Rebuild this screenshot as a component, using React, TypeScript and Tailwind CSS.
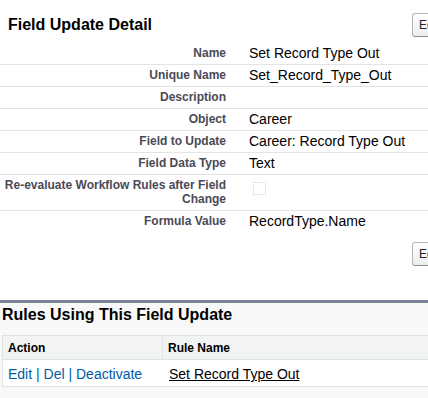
import React from 'react';

interface DetailRow {
  label: string;
  value?: string;
  checkbox?: boolean;
  last?: boolean;
}

const rows: DetailRow[] = [
  { label: 'Name', value: 'Set Record Type Out' },
  { label: 'Unique Name', value: 'Set_Record_Type_Out' },
  { label: 'Description', value: '' },
  { label: 'Object', value: 'Career' },
  { label: 'Field to Update', value: 'Career: Record Type Out' },
  { label: 'Field Data Type', value: 'Text' },
  { label: 'Re-evaluate Workflow Rules after Field Change', checkbox: true },
  { label: 'Formula Value', value: 'RecordType.Name', last: true },
];

// grey classic-style button, cut off by the window's right edge
const EditButton: React.FC = () => (
  <button className="h-[24px] shrink-0 rounded-[3px] border border-[#b5b5b5] border-b-[#8f8f8f] bg-gradient-to-b from-white to-[#ededed] px-[6px] text-[12px] leading-[14px] text-[#222]">
    Edit
  </button>
);

const App: React.FC = () => {
  return (
    <div className="w-[428px] h-[398px] overflow-hidden bg-white font-['Liberation_Sans',Arial,sans-serif]">
      <div className="w-[480px]">
        {/* Detail header */}
        <div className="flex items-center pl-[8px] pt-[13px] pb-[6px]">
          <h2 className="w-[404px] shrink-0 text-[16px] leading-[18px] font-bold text-black">
            Field Update Detail
          </h2>
          <EditButton />
        </div>

        {/* Detail rows */}
        <div>
          {rows.map((row) => (
            <div
              key={row.label}
              className={`grid grid-cols-[236px_1fr] items-start ${row.last ? '' : 'border-b border-[#e4e4e4]'}`}
            >
              <div className="pr-[10px] pt-[3px] pb-[4px] text-right text-[12px] leading-[14px] font-bold text-[#4a4a56]">
                {row.label}
              </div>
              <div className="pl-[13px] pt-[2px] pb-[2px] text-[14px] leading-[17px] text-black">
                {row.checkbox ? (
                  <span className="mt-[5px] ml-[4px] block h-[13px] w-[13px] border border-dotted border-[#cfcfcf]" />
                ) : (
                  row.value || '\u00a0'
                )}
              </div>
            </div>
          ))}
        </div>

        <div className="flex pl-[412px] pt-[10px]">
          <EditButton />
        </div>

        {/* Related list */}
        <div className="mt-[34px] border-t-[3px] border-[#7c8397] bg-[#f8f8f8] pl-[2px] pt-[3px] pb-[20px]">
          <h3 className="text-[16px] leading-[18px] font-bold text-black">Rules Using This Field Update</h3>
          <div className="mt-[11px] border border-[#e0e3e5] bg-white">
            <div className="flex border-b border-[#e0e3e5] bg-[#f2f3f3] text-[12px] leading-[14px] font-bold text-black">
              <div className="w-[160px] border-r border-[#e0e3e5] pl-[5px] pt-[5px] pb-[4px]">Action</div>
              <div className="pl-[5px] pt-[5px] pb-[4px]">Rule Name</div>
            </div>
            <div className="flex text-[14px] leading-[17px]">
              <div className="w-[161px] pl-[5px] pt-[6px] pb-[3px] text-[#015ba7]">
                <a href="#">Edit</a> | <a href="#">Del</a> | <a href="#">Deactivate</a>
              </div>
              <div className="pl-[5px] pt-[6px] pb-[3px]">
                <a href="#" className="text-black underline">Set Record Type Out</a>
              </div>
            </div>
          </div>
        </div>
      </div>
    </div>
  );
};

export default App;
